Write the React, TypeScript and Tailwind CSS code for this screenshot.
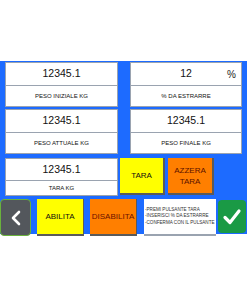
import React from "react";

const font = { fontFamily: '"Liberation Sans", Arial, sans-serif' };

function Card({
  value,
  label,
  valueH,
  labelH,
  width,
  suffix,
}: {
  value: string;
  label: string;
  valueH: string;
  labelH: string;
  width: string;
  suffix?: string;
}) {
  return (
    <div className={`${width} bg-white border border-[#9aa3b0] flex flex-col`}>
      <div className={`${valueH} relative flex items-center justify-center text-[10.5px] text-[#111]`}>
        {value}
        {suffix && <span className="absolute right-[5px] text-[10px] text-[#222]">{suffix}</span>}
      </div>
      <div className={`${labelH} border-t border-[#9aa3b0] flex items-center justify-center text-[6px] text-[#111]`}>
        {label}
      </div>
    </div>
  );
}

export default function App() {
  return (
    <div className="w-[247px] h-[296px] bg-white overflow-hidden" style={font}>
      <div className="h-[61px]" />
      <div className="h-[173px] bg-[#1d6bff] flex flex-col pt-[1px]">
        <div className="flex pl-[5px] gap-[12px]">
          <Card value="12345.1" label="PESO INIZIALE KG" width="w-[113px]" valueH="h-[22px]" labelH="h-[21px]" />
          <Card value="12" label="% DA ESTRARRE" width="w-[112px]" valueH="h-[22px]" labelH="h-[21px]" suffix="%" />
        </div>
        <div className="flex pl-[5px] gap-[12px] mt-[2px]">
          <Card value="12345.1" label="PESO ATTUALE KG" width="w-[113px]" valueH="h-[22px]" labelH="h-[21px]" />
          <Card value="12345.1" label="PESO FINALE KG" width="w-[112px]" valueH="h-[22px]" labelH="h-[21px]" />
        </div>
        <div className="flex pl-[5px] mt-[4px] items-stretch">
          <Card value="12345.1" label="TARA KG" width="w-[113px]" valueH="h-[21px]" labelH="h-[15px]" />
          <div className="ml-[2px] w-[45px] h-[37px] bg-[#ffff00] border-r-2 border-b-2 border-[#5a5a5a] flex items-center justify-center text-[8px] text-[#111]">
            TARA
          </div>
          <div className="ml-[3px] w-[46px] h-[37px] bg-[#ff7f00] border-r-2 border-b-2 border-[#5a5a5a] flex flex-col items-center justify-center text-[8px] leading-[11px] text-[#5a1200]">
            <span>AZZERA</span>
            <span>TARA</span>
          </div>
        </div>
        <div className="flex mt-[3px] items-start">
          <div className="w-[31px] h-[37px] bg-[#53575c] border-[1.5px] border-[#6ab23c] rounded-[4px] flex items-center justify-center">
            <svg width="12" height="16" viewBox="0 0 12 16">
              <path d="M9 2 L3 8 L9 14" fill="none" stroke="white" strokeWidth="2.6" strokeLinecap="round" strokeLinejoin="round" />
            </svg>
          </div>
          <div className="ml-[6px] w-[47px] h-[37px] bg-[#ffff00] border-r border-b-2 border-[#5a5a5a] flex items-center justify-center text-[8px] text-[#111]">
            ABILITA
          </div>
          <div className="ml-[6px] w-[47px] h-[37px] bg-[#ff7f00] border-r border-b-2 border-[#5a5a5a] flex items-center justify-center text-[8px] text-[#6a1000]">
            DISABILITA
          </div>
          <div className="ml-[7px] w-[72px] h-[37px] bg-white border-b-2 border-[#9aa3b0] flex flex-col justify-center pl-[1px] text-[4.6px] leading-[6.5px] text-[#333]">
            <span>-PREMI PULSANTE TARA</span>
            <span>-INSERISCI % DA ESTRARRE</span>
            <span>-CONFERMA CON IL PULSANTE</span>
          </div>
          <div className="ml-[2px] mt-[1px] w-[28px] h-[33px] bg-[#1a9a45] rounded-[4px] flex items-center justify-center">
            <svg width="20" height="18" viewBox="0 0 20 18">
              <path d="M3 9.5 L8 14.5 L17 3" fill="none" stroke="white" strokeWidth="3.2" strokeLinecap="round" strokeLinejoin="round" />
            </svg>
          </div>
        </div>
      </div>
    </div>
  );
}
